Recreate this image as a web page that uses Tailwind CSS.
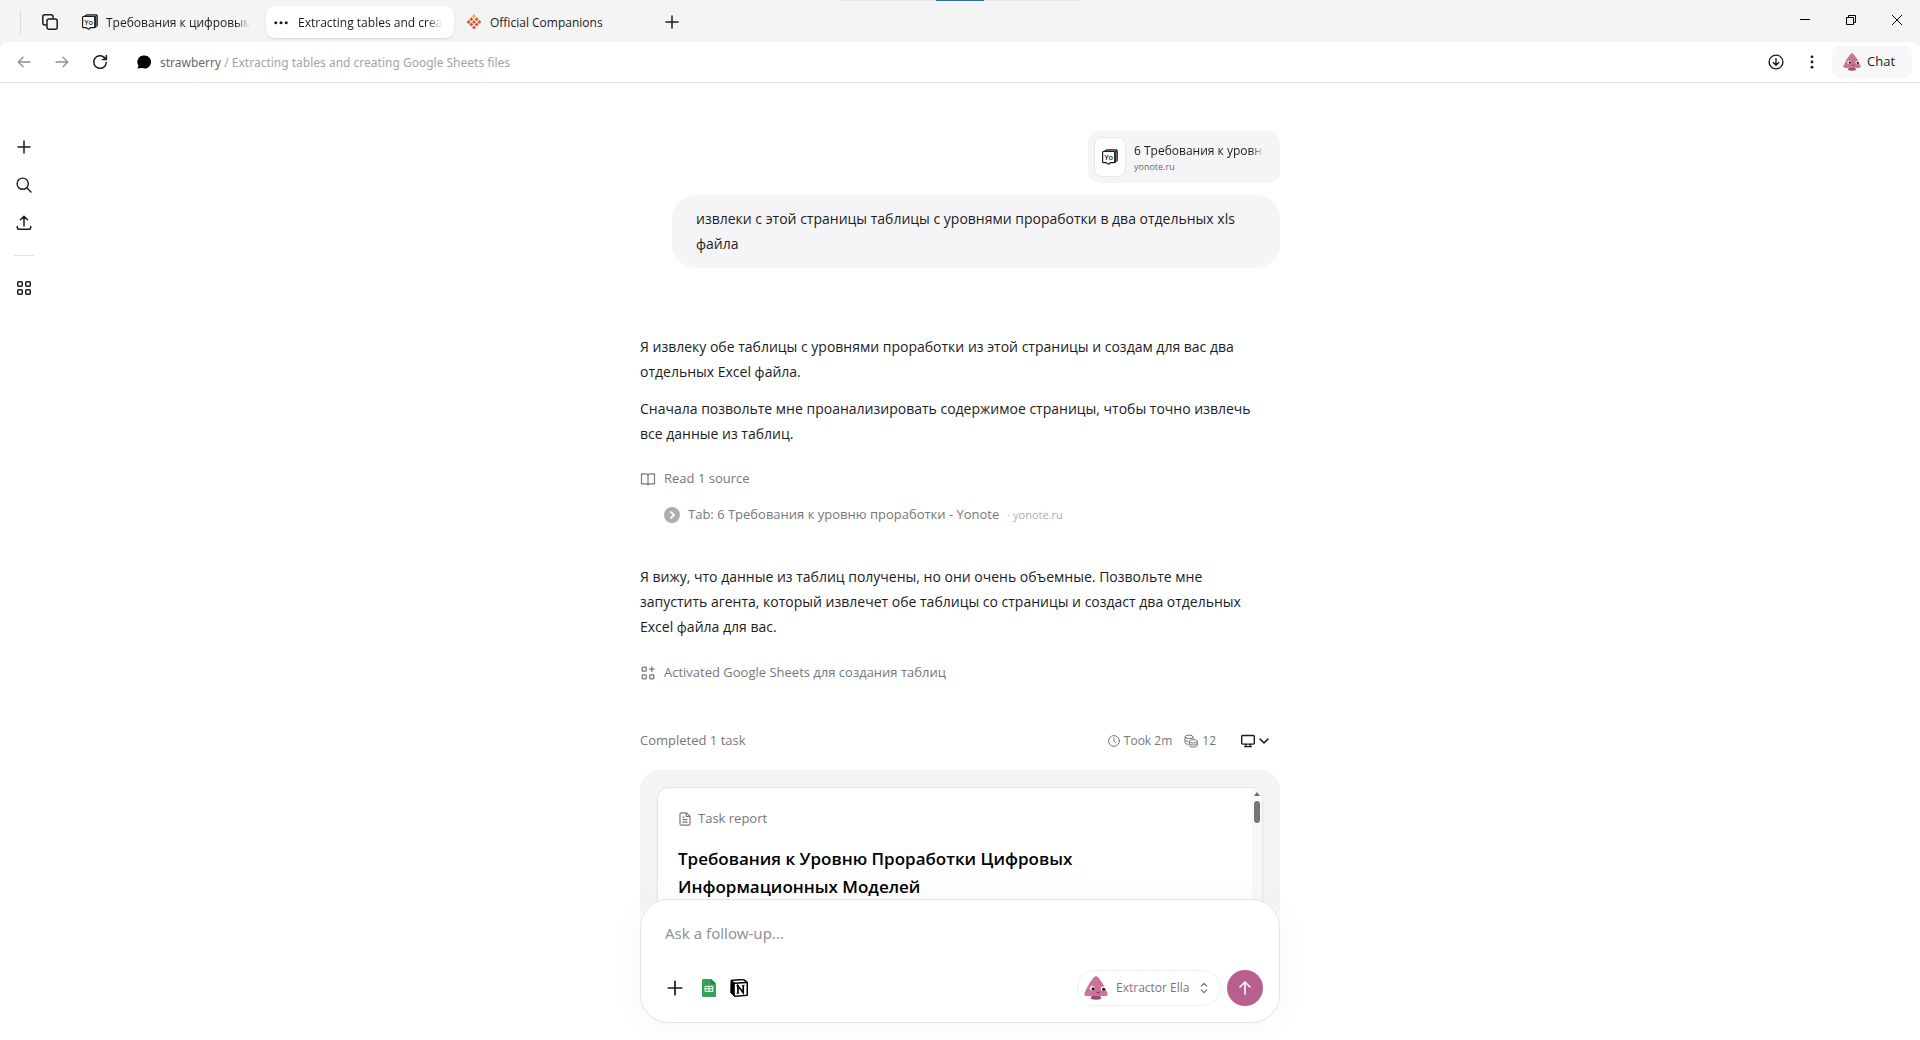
<!DOCTYPE html>
<html lang="ru">

<head>
  <meta charset="UTF-8">
  <meta name="viewport" content="width=device-width, initial-scale=1.0">
  <title>Extracting tables and creating Google Sheets files</title>
  <script src="https://cdn.jsdelivr.net/npm/@tailwindcss/browser@4"></script>
</head>

<body class="h-screen flex flex-col overflow-hidden bg-[#f4f4f4] font-['Open_Sans','Noto_Sans',sans-serif] text-[#1c1c1f]">
  <!-- Shared icons -->
  <svg class="hidden">
    <symbol id="yonote" viewBox="0 0 16 16">
      <path d="M2.500 2 4.500.7h10q.9 0 .9.900v10.200l-2 2V3.200q0-.8-.8-.8z" fill="#1c1c1f" stroke="#1c1c1f" stroke-width=".8" stroke-linejoin="round" />
      <path d="M4.300 1.500h9q1.200 0 1.200 1.200v10" fill="none" stroke="#ddd" stroke-width=".4" />
      <path d="M1.500 2.500h10.300q.9 0 .9.900v9.400q0 .9-.9.900H8.200q-.2 1.500-1.500 1.500L4.300 13.700H1.500q-.9 0-.9-.9V3.400q0-.9.900-.9z" fill="#fff" stroke="#1c1c1f" stroke-width="1.200" stroke-linejoin="round" />
      <text x="6.700" y="10.700" text-anchor="middle" font-size="7.500" font-weight="600" fill="#1c1c1f">Yo</text>
    </symbol>
    <symbol id="ella" viewBox="0 0 24 24">
      <path d="M8 19.500h8l1.500 3.300q-5.500 2-11 0z" fill="#9c4b73" />
      <path d="M10 1.300q2-2 4 0Q19.500 7.500 23.300 16.800q1.300 3.200-2.800 3.200h-17Q-.6 20 .7 16.800 4.500 7.500 10 1.300z" fill="#cb7399" />
      <circle cx="8.200" cy="12.300" r="2.300" fill="#fff" />
      <circle cx="19" cy="12.800" r="2.300" fill="#fff" />
      <circle cx="9" cy="12.700" r="1.500" fill="#1b1119" />
      <circle cx="19.600" cy="13.200" r="1.500" fill="#1b1119" />
      <path d="M12.500 16.200q1.500 1.300 3 0" fill="none" stroke="#5b2440" stroke-width=".8" stroke-linecap="round" />
    </symbol>
    <symbol id="plus" viewBox="0 0 16 16">
      <path d="M8 2v12M2 8h12" fill="none" stroke="currentColor" stroke-width="1.500" stroke-linecap="round" />
    </symbol>
  </svg>

  <!-- Tab strip -->
  <header class="relative h-[42px] shrink-0 flex items-start pt-[6px] text-[12px]">
    <div class="absolute top-0 left-1/2 -translate-x-1/2 w-60 h-px bg-[#e4e4e4] flex justify-center">
      <span class="w-12 h-px bg-[#2f6c9c]"></span>
    </div>
    <span class="w-px h-6 mt-1 ml-5 bg-[#dcdcdc]"></span>
    <button class="ml-[21px] mr-4 h-8 flex items-center" aria-label="Tabs">
      <svg class="size-4" viewBox="0 0 16 16" fill="none" stroke="#1c1c1f" stroke-width="1.500">
        <rect x="5" y="5" width="10.200" height="10.200" rx="2" />
        <path d="M4.800 11H2.800Q.8 11 .8 9V2.800q0-2 2-2H9q2 0 2 2V5" />
      </svg>
    </button>
    <nav class="flex gap-1">
      <a href="#" class="w-[188px] h-8 pl-2 pr-3 flex items-center gap-2 font-medium">
        <svg class="size-4 shrink-0"><use href="#yonote" /></svg>
        <span class="flex-1 pt-px overflow-hidden whitespace-nowrap mask-r-from-90%">Требования к цифровым</span>
      </a>
      <a href="#" class="w-[188px] h-8 pl-2 pr-3 flex items-center gap-[10px] font-medium bg-white rounded-lg shadow-sm">
        <svg class="w-[14px] h-4 shrink-0" viewBox="0 0 14 16" fill="#1c1c1f">
          <circle cx="1.800" cy="8.700" r="1.500" /><circle cx="7" cy="8.700" r="1.500" /><circle cx="12.200" cy="8.700" r="1.500" />
        </svg>
        <span class="flex-1 pt-px overflow-hidden whitespace-nowrap mask-r-from-90%">Extracting tables and crea</span>
      </a>
      <a href="#" class="w-[188px] h-8 pl-2 pr-3 flex items-center gap-2 font-medium">
        <svg class="size-4 shrink-0" viewBox="0 0 16 16">
          <g fill="#d9553a">
            <path d="M5.300 3.200l2 2-2 2-2-2zM10.700 3.200l2 2-2 2-2-2zM2.600 5.900l2 2-2 2-2-2zM8 5.900l2 2-2 2-2-2zM13.400 5.900l2 2-2 2-2-2zM5.300 8.600l2 2-2 2-2-2zM10.700 8.600l2 2-2 2-2-2zM8 11.500l2 2-2 2-2-2z" />
          </g>
          <path d="M8 0l2 2.500-2 2-2-2z" fill="#e2b73f" />
        </svg>
        <span class="pt-px">Official Companions</span>
      </a>
    </nav>
    <button class="ml-[18px] h-8 flex items-center" aria-label="New tab"><svg class="size-4"><use href="#plus" /></svg></button>
    <div class="ml-auto mr-[18px] h-7 flex items-center gap-[36px]">
      <button aria-label="Minimize"><svg class="size-[10px]" viewBox="0 0 10 10"><path d="M0 4.500h10" stroke="#000" /></svg></button>
      <button aria-label="Restore">
        <svg class="size-[10px]" viewBox="0 0 10 10" fill="none" stroke="#000"><path d="M.5 2.500h7v7h-7zM2.500 2.500v-2h7v7h-2" /></svg>
      </button>
      <button aria-label="Close"><svg class="size-[10px]" viewBox="0 0 10 10"><path d="M0 0l10 10M10 0L0 10" stroke="#000" /></svg></button>
    </div>
  </header>

  <!-- Address bar -->
  <div class="h-[41px] shrink-0 flex items-center bg-white rounded-t-lg border-b border-[#e2e2e2] pl-4 pr-2">
    <div class="flex gap-[22px]">
      <button aria-label="Back">
        <svg class="size-4" viewBox="0 0 16 16" fill="none" stroke="#8f8f92" stroke-width="1.300" stroke-linecap="round" stroke-linejoin="round"><path d="M14 8H2.500M7 3.200 2.200 8 7 12.800" /></svg>
      </button>
      <button aria-label="Forward">
        <svg class="size-4" viewBox="0 0 16 16" fill="none" stroke="#8f8f92" stroke-width="1.300" stroke-linecap="round" stroke-linejoin="round"><path d="M2 8h11.500M9 3.200 13.800 8 9 12.800" /></svg>
      </button>
      <button aria-label="Reload">
        <svg class="size-4" viewBox="0 0 16 16" fill="none" stroke="#1c1c1f" stroke-width="1.500" stroke-linecap="round" stroke-linejoin="round"><path d="M14.300 8.500A6.300 6.300 0 1 1 12.500 3.600L14.300 5.300M14.400 1.500v3.900h-3.900" /></svg>
      </button>
    </div>
    <svg class="size-4 ml-7 mr-2" viewBox="0 0 16 16"><path d="M8.500 1.500a6.500 6.500 0 1 1-2.200 12.600L1.200 14.500q1.300-1.500 1.200-3A6.500 6.500 0 0 1 8.500 1.500z" fill="#000" /></svg>
    <p class="pt-px font-['Noto_Sans',sans-serif] text-[12px] text-[#a3a3a6]"><a href="#" class="text-[#68686c]">strawberry</a> / Extracting tables and creating Google Sheets files</p>
    <div class="ml-auto flex items-center">
      <button aria-label="Downloads">
        <svg class="size-4 mr-5" viewBox="0 0 16 16" fill="none" stroke="#1c1c1f" stroke-width="1.400" stroke-linecap="round" stroke-linejoin="round"><circle cx="8" cy="8" r="6.900" /><path d="M8 4.600v6.600M5.200 8.500 8 11.300l2.800-2.800" /></svg>
      </button>
      <button aria-label="Menu">
        <svg class="size-4 mr-3" viewBox="0 0 16 16" fill="#1c1c1f"><circle cx="8" cy="2.800" r="1.400" /><circle cx="8" cy="8" r="1.400" /><circle cx="8" cy="13.200" r="1.400" /></svg>
      </button>
      <button class="w-20 h-8 flex items-center gap-[6px] pl-[11px] rounded-lg bg-[#f7f7f8] text-[13px]">
        <svg class="w-[18px] h-5"><use href="#ella" /></svg>Chat
      </button>
    </div>
  </div>

  <div class="relative flex-1 min-h-0 grid grid-cols-[48px_1fr_48px] bg-white">
    <!-- Sidebar -->
    <aside class="flex flex-col items-center pt-14">
      <div class="flex flex-col gap-[22px]">
        <button aria-label="New chat"><svg class="size-4"><use href="#plus" /></svg></button>
        <button aria-label="Search">
          <svg class="size-4" viewBox="0 0 16 16" fill="none" stroke="#1c1c1f" stroke-width="1.400" stroke-linecap="round"><circle cx="6.700" cy="6.700" r="5.600" /><path d="M10.800 10.800 15 15" /></svg>
        </button>
        <button aria-label="Upload">
          <svg class="size-4" viewBox="0 0 16 16" fill="none" stroke="#1c1c1f" stroke-width="1.500" stroke-linecap="round" stroke-linejoin="round"><path d="M8 11V1.500M4.500 4.800 8 1.300l3.500 3.500M1.300 11.500v1.300q0 1.500 1.500 1.500h10.400q1.500 0 1.500-1.500v-1.300" /></svg>
        </button>
      </div>
      <hr class="w-5 my-6 border-[#e2e2e2]">
      <button aria-label="Apps">
        <svg class="size-4" viewBox="0 0 16 16" fill="none" stroke="#1c1c1f" stroke-width="1.500"><rect x="1.700" y="1.700" width="4.600" height="4.600" rx="1" /><rect x="9.700" y="1.700" width="4.600" height="4.600" rx="1" /><rect x="1.700" y="9.700" width="4.600" height="4.600" rx="1" /><rect x="9.700" y="9.700" width="4.600" height="4.600" rx="1" /></svg>
      </button>
    </aside>

    <!-- Conversation -->
    <main class="w-full max-w-[640px] mx-auto pt-12 min-h-0 overflow-hidden text-[14px] leading-[25px]">
      <a href="#" class="ml-auto w-48 h-[52px] p-[6px] pr-4 flex items-center gap-2 rounded-xl bg-[#f5f5f7]">
        <span class="w-8 h-10 shrink-0 flex items-center justify-center bg-white border border-[#e8e8ea] rounded-lg">
          <svg class="size-4"><use href="#yonote" /></svg>
        </span>
        <span class="flex-1 pt-[3px] overflow-hidden whitespace-nowrap">
          <span class="block text-[12px] leading-4 mask-r-from-90%">6 Требования к уровн</span>
          <span class="block text-[9px] leading-4 text-[#68686c]">yonote.ru</span>
        </span>
      </a>
      <p class="mt-3 ml-8 px-6 pt-[11px] pb-3 rounded-3xl bg-[#f5f5f7]">извлеки с этой страницы таблицы с уровнями проработки в два отдельных xls файла</p>

      <p class="mt-[66px] pr-6">Я извлеку обе таблицы с уровнями проработки из этой страницы и создам для вас два отдельных Excel файла.</p>
      <p class="mt-3 pr-6">Сначала позвольте мне проанализировать содержимое страницы, чтобы точно извлечь все данные из таблиц.</p>

      <div class="mt-5 flex items-center gap-2 text-[13px] text-[#77777a]">
        <svg class="size-4" viewBox="0 0 16 16" fill="none" stroke="currentColor" stroke-width="1.200" stroke-linejoin="round"><path d="M8 3.800Q7 2.800 5.500 2.800H1.500v10h4.200q1.500 0 2.300 1 .8-1 2.300-1h4.200v-10h-4Q9 2.800 8 3.800zM8 3.800v10" /></svg>
        Read 1 source
      </div>
      <div class="mt-[11px] ml-6 flex items-center gap-2 text-[13px] text-[#77777a]">
        <svg class="size-4" viewBox="0 0 16 16"><circle cx="8" cy="8" r="8" fill="#adadaf" /><path d="M6.800 5 10 8l-3.200 3" fill="none" stroke="#fff" stroke-width="1.800" stroke-linecap="round" stroke-linejoin="round" /></svg>
        <a href="#">Tab: 6 Требования к уровню проработки - Yonote</a>
        <span class="text-[11px] text-[#adadaf]">· yonote.ru</span>
      </div>

      <p class="mt-[37px] pr-6">Я вижу, что данные из таблиц получены, но они очень объемные. Позвольте мне запустить агента, который извлечет обе таблицы со страницы и создаст два отдельных Excel файла для вас.</p>

      <div class="mt-[21px] flex items-center gap-2 text-[13px] text-[#77777a]">
        <svg class="size-4" viewBox="0 0 16 16" fill="none" stroke="currentColor" stroke-width="1.300"><rect x="2.200" y="2.200" width="4" height="4" rx=".8" /><rect x="2.200" y="9.800" width="4" height="4" rx=".8" /><rect x="9.800" y="9.800" width="4" height="4" rx=".8" /><path d="M11.800 1.500v5.400M9.100 4.200h5.400" /></svg>
        Activated Google Sheets для создания таблиц
      </div>

      <div class="mt-[43px] pr-[10px] flex items-center text-[13px] text-[#77777a]">
        Completed 1 task
        <span class="ml-auto flex items-center gap-1 text-[12px]">
          <svg class="size-3" viewBox="0 0 12 12" fill="none" stroke="currentColor" stroke-linecap="round"><circle cx="6" cy="6" r="5.400" /><path d="M6 3v3.200L7.800 8" /></svg>
          Took 2m
        </span>
        <span class="ml-3 flex items-center gap-1 text-[12px]">
          <svg class="size-[14px]" viewBox="0 0 14 14" fill="none" stroke="currentColor"><ellipse cx="5" cy="2.800" rx="4" ry="1.700" /><path d="M1 2.800v6q0 1.200 3 1.600M1 5.800q.3 1.300 3.500 1.600M9 2.800v2.500" /><ellipse cx="9.300" cy="7.300" rx="4" ry="1.700" /><path d="M5.300 7.300v4.200q.4 1.700 4 1.700t4-1.700V7.300M5.300 9.400q.4 1.700 4 1.700t4-1.700" /></svg>
          12
        </span>
        <button class="ml-6 flex items-center gap-[2px] text-[#1c1c1f]" aria-label="Screen">
          <svg class="size-4" viewBox="0 0 16 16" fill="none" stroke="currentColor" stroke-width="1.400" stroke-linejoin="round" stroke-linecap="round"><rect x="1.700" y="2.500" width="12.600" height="8.600" rx="1" /><path d="M6 11.500v2M10 11.500v2M4.500 13.600h7" /></svg>
          <svg class="size-3" viewBox="0 0 12 12" fill="none" stroke="currentColor" stroke-width="1.600" stroke-linejoin="round" stroke-linecap="round"><path d="M2 4l4 4 4-4" /></svg>
        </button>
      </div>

      <!-- Task report -->
      <section class="mt-[17px] h-80 p-4 rounded-[20px] bg-[#f4f4f6] border border-[#f0f0f2]">
        <div class="relative h-full pt-[18px] pl-5 pr-24 bg-white border border-[#e5e5e8] rounded-xl overflow-hidden shadow-xs">
          <div class="flex items-center gap-[6px] text-[13px] text-[#77777a]">
            <svg class="size-[14px]" viewBox="0 0 14 14" fill="none" stroke="currentColor" stroke-width="1.200" stroke-linejoin="round"><path d="M8.500.8H3.500q-1.500 0-1.500 1.500v9.400q0 1.500 1.500 1.500h7q1.500 0 1.500-1.500V4.300zM8.300 1v3.500h3.500M4.500 5.200h2M4.500 7.700h5M4.500 10.200h5" /></svg>
            Task report
          </div>
          <h2 class="mt-[14px] text-[17px] leading-[28px] font-semibold text-black">Требования к Уровню Проработки Цифровых Информационных Моделей</h2>
          <div class="absolute top-0 right-0 w-[10px] h-full pt-1 flex flex-col items-center gap-[5px] bg-[#f8f8f9]">
            <svg class="w-[6px] h-1" viewBox="0 0 6 4"><path d="M3 0l3 4H0z" fill="#6c6c6e" /></svg>
            <span class="w-[6px] h-[22px] rounded-full bg-[#777779]"></span>
          </div>
        </div>
      </section>
    </main>

    <!-- Composer -->
    <div class="absolute inset-x-12 bottom-0 flex justify-center">
      <div class="w-full max-w-[640px] pb-[17px] bg-linear-to-b from-transparent to-white to-20%">
        <form class="h-[124px] p-4 pt-[21px] flex flex-col justify-between bg-white border border-[#e4e1e6] rounded-[28px] shadow-[0_4px_32px_#5a3c5a0c]">
          <input type="text" aria-label="Message" placeholder="Ask a follow-up..." class="px-2 h-6 w-full font-['Noto_Sans',sans-serif] text-[15px] outline-none placeholder:text-[#929296]">
          <div class="flex items-center">
            <button type="button" class="ml-[9px] text-[#1c1c1f]" aria-label="Add"><svg class="size-[18px]"><use href="#plus" /></svg></button>
            <button type="button" class="ml-[18px]" aria-label="Google Sheets">
              <svg class="w-[14px] h-[18px]" viewBox="0 0 14 18"><path d="M1.200 0H9l5 4.800V17q0 1-1 1H1.200q-1.200 0-1.200-1.200V1.200Q0 0 1.200 0z" fill="#34a05a" /><path d="M9 0l5 4.800H10Q9 4.800 9 3.800z" fill="#1f7f41" /><path d="M3.100 7.300h7.800v5H3.100zM7 7.300v5M3.100 9.800h7.800" fill="none" stroke="#fff" stroke-width="1" /></svg>
            </button>
            <button type="button" class="ml-[14px]" aria-label="Notion">
              <svg class="size-[18px]" viewBox="0 0 18 18"><path d="M1 1.200 13.500.3l4 2.700v13.500l-13 1L.8 13.600z" fill="#000" stroke="#000" stroke-linejoin="round" /><path d="M2.500 1.900 13 1.200l2.300 1.600L5 3.500z" fill="#fff" /><path d="M4.800 5.100 16.500 4.300v11.500L4.800 16.500z" fill="#fff" /><path d="M7.900 14.200V6.800l5.300 7V6.400" fill="none" stroke="#000" stroke-width="1.700" /><path d="M6.300 6.900h2.500M6.500 14.300h2.700M11.900 6.400h2.800" stroke="#000" stroke-width=".9" /></svg>
            </button>
            <button type="button" class="ml-auto h-9 w-36 pl-[6px] pr-3 flex items-center gap-2 rounded-full border border-[#f1eff2] text-[12px] text-[#77777a]">
              <svg class="size-6 shrink-0"><use href="#ella" /></svg>
              Extractor Ella
              <svg class="ml-auto w-2 h-3 shrink-0" viewBox="0 0 8 12" fill="none" stroke="currentColor" stroke-width="1.200" stroke-linecap="round" stroke-linejoin="round"><path d="M1.300 4 4 1.300 6.700 4M1.300 8 4 10.700 6.700 8" /></svg>
            </button>
            <button type="submit" class="ml-[6px] size-9 flex items-center justify-center rounded-full bg-[#b85f90]" aria-label="Send">
              <svg class="size-4" viewBox="0 0 16 16" fill="none" stroke="#fff" stroke-width="1.600" stroke-linecap="round" stroke-linejoin="round"><path d="M8 14V2M3 7l5-5 5 5" /></svg>
            </button>
          </div>
        </form>
      </div>
    </div>
  </div>
</body>

</html>
